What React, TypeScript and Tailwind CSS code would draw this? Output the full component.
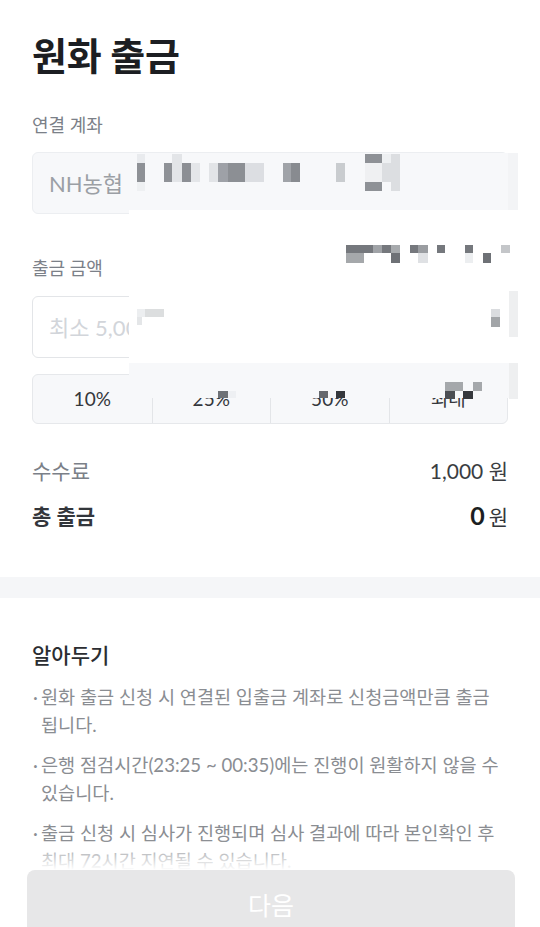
import React from "react";

type B = [number, number, number, number, string];

const blocks: B[] = [
  // account field mosaic
  [137, 154, 8, 9, "#e9ebee"],
  [137, 163, 8, 19, "#8e9196"],
  [137, 182, 8, 9, "#eef0f2"],
  [164, 163, 8, 19, "#8f9297"],
  [172, 154, 10, 28, "#e3e5e8"],
  [182, 163, 9, 19, "#8c8f94"],
  [191, 163, 9, 19, "#e4e6e9"],
  [209, 163, 9, 19, "#e2e4e7"],
  [218, 163, 10, 19, "#9ea1a7"],
  [228, 163, 17, 19, "#8c8f94"],
  [245, 163, 19, 19, "#dcdee2"],
  [283, 163, 8, 19, "#a0a3a8"],
  [291, 163, 9, 19, "#888b90"],
  [336, 163, 9, 19, "#c9cccf"],
  [365, 154, 17, 9, "#8e9196"],
  [365, 163, 17, 19, "#eff0f2"],
  [365, 182, 17, 9, "#8e9196"],
  [382, 154, 9, 9, "#eef0f2"],
  [382, 163, 9, 19, "#dcdee1"],
  [391, 154, 9, 37, "#dcdee1"],
  // above input mosaic
  [346, 245, 27, 8, "#75787d"],
  [346, 253, 18, 10, "#a5a8ab"],
  [373, 245, 9, 8, "#a0a3a7"],
  [382, 245, 9, 8, "#75787d"],
  [391, 245, 9, 8, "#a7aaad"],
  [391, 253, 9, 10, "#6e7176"],
  [410, 245, 8, 8, "#75787d"],
  [418, 245, 10, 8, "#9a9da1"],
  [418, 253, 10, 10, "#dfe1e4"],
  [437, 245, 8, 8, "#75787d"],
  [465, 245, 8, 8, "#75787d"],
  [465, 253, 8, 10, "#eceef0"],
  [483, 253, 8, 10, "#6e7176"],
  [501, 245, 9, 8, "#c4c6c9"],
  // input mosaic
  [137, 309, 8, 8, "#eceef0"],
  [145, 309, 19, 8, "#dcdedf"],
  [137, 317, 5, 8, "#e4e6e8"],
  [491, 309, 9, 8, "#dadcdf"],
  [491, 317, 9, 10, "#a2a5a8"],
  // percent mosaic
  [218, 391, 10, 7, "#6e7176"],
  [228, 391, 8, 7, "#eef0f3"],
  [319, 391, 9, 7, "#66696e"],
  [336, 391, 9, 7, "#35383d"],
  [445, 382, 18, 9, "#a5a8ab"],
  [473, 382, 9, 9, "#a5a8ab"],
  [445, 391, 10, 8, "#4b4e53"],
  [463, 391, 10, 8, "#35383d"],
];

export default function App() {
  return (
    <div className="relative w-[540px] h-[927px] overflow-hidden bg-white font-['Lato','Noto_Sans_CJK_KR',sans-serif]">
      <div className="px-8 pt-[33px]">
        <h1 className="text-[38px] font-bold leading-[44px] tracking-[-0.3px] text-[#1c1e22]">원화 출금</h1>

        <div className="mt-[36px] text-[18px] leading-[24px] text-[#7b8088]">연결 계좌</div>
        <div className="mt-[15px] flex h-[62px] items-center rounded-[6px] border border-[#eceef1] bg-[#f7f8fa] px-4 text-[22px] text-[#9b9fa5]">
          NH농협
        </div>

        <div className="mt-[42px] text-[18px] leading-[24px] text-[#7b8088]">출금 금액</div>
        <div className="mt-[16px] flex h-[62px] items-center rounded-[6px] border border-[#e3e5e8] bg-white px-4 text-[22px] text-[#d2d5da]">
          최소 5,000원 이상
        </div>

        <div className="mt-[16px] grid h-[50px] grid-cols-4 rounded-[6px] border border-[#e6e8eb] bg-[#f7f8fa] text-[19px] text-[#34373c]">
          <div className="flex items-center justify-center">10%</div>
          <div className="flex items-center justify-center border-l border-[#e3e5e8]">25%</div>
          <div className="flex items-center justify-center border-l border-[#e3e5e8]">50%</div>
          <div className="flex items-center justify-center border-l border-[#e3e5e8]">최대</div>
        </div>

        <div className="mt-[33px] flex h-[28px] items-center justify-between text-[21px]">
          <span className="text-[#7b8088]">수수료</span>
          <span className="text-[#3a3d42]">1,000 원</span>
        </div>
        <div className="mt-[17px] flex h-[28px] items-center justify-between text-[21px]">
          <span className="font-bold text-[#33363b]">총 출금</span>
          <span className="flex items-baseline text-[#33363b]">
            <span className="mr-[4px] text-[25px] font-bold text-[#1c1e22]">0</span>원
          </span>
        </div>
      </div>

      <div className="mt-[47px] h-[21px] bg-[#f5f6f8]" />

      <div className="pl-8 pr-[37px] pt-[43px]">
        <div className="text-[21px] leading-[28px] font-medium text-[#2b2d31]">알아두기</div>
        <ul className="mt-[14px] flex flex-col gap-[12px] text-[18.6px] leading-[28px] text-[#8a8d92]">
          <li className="flex">
            <span className="w-[9px] shrink-0 pl-[1px]">·</span>
            <span>원화 출금 신청 시 연결된 입출금 계좌로 신청금액만큼 출금됩니다.</span>
          </li>
          <li className="flex">
            <span className="w-[9px] shrink-0 pl-[1px]">·</span>
            <span>은행 점검시간(23:25 ~ 00:35)에는 진행이 원활하지 않을 수 있습니다.</span>
          </li>
          <li className="flex">
            <span className="w-[9px] shrink-0 pl-[1px]">·</span>
            <span>출금 신청 시 심사가 진행되며 심사 결과에 따라 본인확인 후 최대 72시간 지연될 수 있습니다.</span>
          </li>
        </ul>
      </div>

      {/* censor overlays */}
      <div className="absolute left-[129px] top-[153px] h-[57px] w-[379px] bg-[#f7f8fa]" />
      <div className="absolute left-[129px] top-[210px] h-[5px] w-[389px] bg-white" />
      <div className="absolute left-[508px] top-[153px] h-[57px] w-[10px] bg-[#f3f4f6]" />
      <div className="absolute left-[129px] top-[289px] h-[74px] w-[389px] bg-white" />
      <div className="absolute left-[509px] top-[291px] h-[46px] w-[9px] bg-[#eeeff0]" />
      <div className="absolute left-[129px] top-[363px] h-[35px] w-[380px] bg-[#f7f8fa]" />
      <div className="absolute left-[509px] top-[363px] h-[36px] w-[9px] bg-[#eeeff0]" />
      {blocks.map(([x, y, w, h, c], i) => (
        <div
          key={i}
          className="absolute"
          style={{ left: x, top: y, width: w, height: h, backgroundColor: c }}
        />
      ))}

      {/* bottom button */}
      <div className="absolute bottom-0 left-0 right-0">
        <div className="h-[30px] bg-gradient-to-b from-white/0 to-white" />
        <div className="bg-white pl-[27px] pr-[25px]">
          <button className="-mb-[15px] flex h-[72px] w-full items-center justify-center rounded-[8px] bg-[#e7e7e8] text-[25px] text-white">
            다음
          </button>
        </div>
      </div>
    </div>
  );
}
